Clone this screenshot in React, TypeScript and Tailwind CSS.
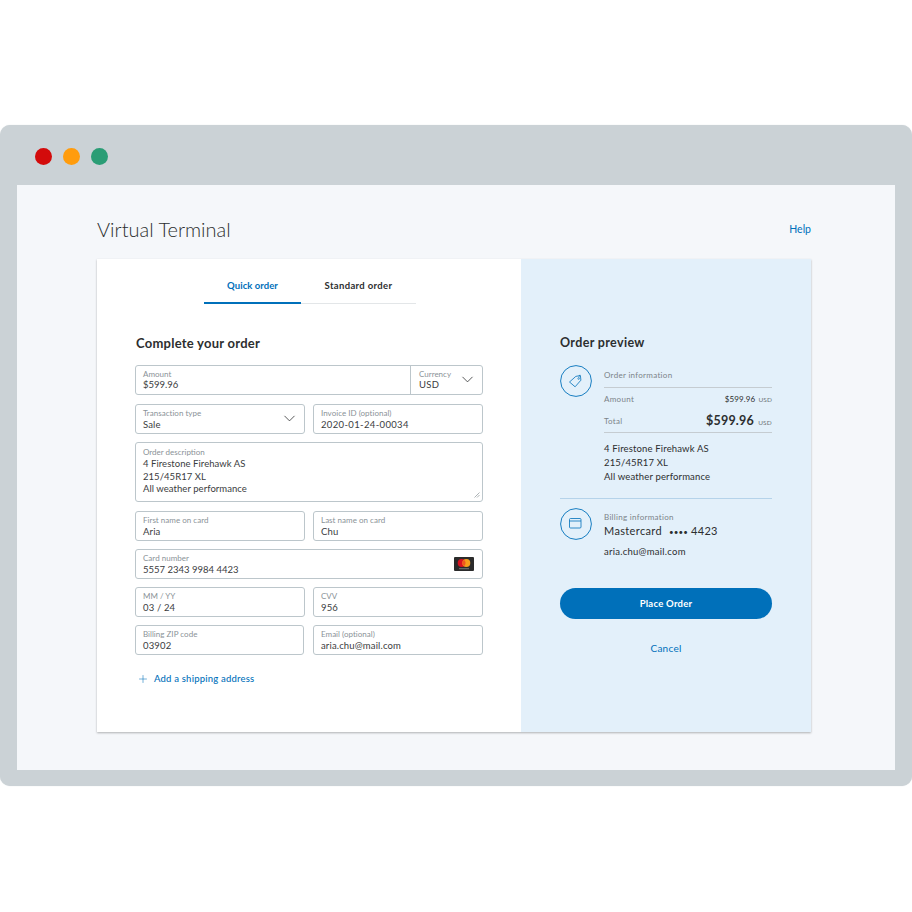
import { FC, ReactNode } from 'react';
import { ChevronDown, Plus } from 'lucide-react';

const font = { fontFamily: 'Lato, "Noto Sans", sans-serif' };

type FieldProps = {
  label: string;
  value: string;
  className?: string;
  valueClass?: string;
  chevron?: boolean;
  children?: ReactNode;
};

const Field: FC<FieldProps> = ({ label, value, className = '', valueClass = 'tracking-[0.15px]', chevron, children }) => (
  <div className={`relative h-[30px] rounded-[3px] border border-[#bcc6cb] bg-white pl-[7px] ${className}`}>
    <div className="mt-[2.5px] text-[8px] leading-[11px] tracking-[0.02px] text-[#8a9297]">{label}</div>
    <div className={`text-[9.5px] leading-[12px] text-[#3a3c3e] ${valueClass}`}>{value}</div>
    {chevron && (
      <ChevronDown className="absolute right-[5px] top-[4px] size-[19px] text-[#2c2e2f]" strokeWidth={1} />
    )}
    {children}
  </div>
);

const CardLogo: FC = () => (
  <svg viewBox="0 0 20 14" className="absolute right-[8px] top-[7px] h-[14px] w-[20px]">
    <rect width="20" height="14" rx="1" fill="#2b2b2b" />
    <circle cx="7.7" cy="6" r="4" fill="#d9121f" />
    <circle cx="12.3" cy="6" r="4" fill="#f79e1b" />
    <path d="M10 2.8a4 4 0 0 1 0 6.4a4 4 0 0 1 0-6.4z" fill="#f0591f" />
    <rect x="5" y="11.2" width="10" height="1" fill="#777" />
  </svg>
);

const TagIcon: FC = () => (
  <svg viewBox="0 0 32 32" className="size-[32px] shrink-0 text-[#0070ba]" fill="none" stroke="currentColor">
    <circle cx="16" cy="16" r="15.4" strokeWidth="0.9" />
    <path d="M9.5 17l6.3-5.6 4.6-.9.5 4.7-5.8 6.6z" strokeWidth="0.8" strokeLinejoin="round" />
    <circle cx="18.6" cy="13.6" r="0.8" strokeWidth="0.6" />
    <path d="M18.8 12.8c.2-1 .6-2 1-3" strokeWidth="0.6" />
  </svg>
);

const CardIcon: FC = () => (
  <svg viewBox="0 0 32 32" className="size-[32px] shrink-0 text-[#0070ba]" fill="none" stroke="currentColor">
    <circle cx="16" cy="16" r="15.4" strokeWidth="0.9" />
    <rect x="9.5" y="10.5" width="11.5" height="9.5" rx="1" strokeWidth="0.8" />
    <path d="M9.5 13h11.5" strokeWidth="0.8" />
  </svg>
);

export default function App() {
  return (
    <div className="h-[912px] w-[912px] bg-white pt-[125px]" style={font}>
      <div className="flex h-[661px] flex-col rounded-[10px] bg-[#cbd2d6] shadow-[0_0_1px_#cbd2d6]">
        <div className="flex h-[60px] shrink-0 items-start gap-[11px] pl-[35px] pt-[23px]">
          <div className="size-[17px] rounded-full bg-[#d30b0b]" />
          <div className="size-[17px] rounded-full bg-[#ff9c0d]" />
          <div className="size-[17px] rounded-full bg-[#2a9d75]" />
        </div>

        <div className="ml-[17px] mr-[17px] h-[585px] bg-[#f5f7fa] pl-[80px] pr-[84px]">
          <div className="flex h-[74px] items-start justify-between pt-[31px]">
            <h1 className="text-[20px] font-light leading-[26px] text-[#2c2e2f]">Virtual Terminal</h1>
            <a className="mt-[6px] text-[10.5px] leading-[14px] text-[#0070ba]">Help</a>
          </div>

          <div className="flex h-[473px] shadow-[0_1px_2px_rgba(44,46,47,0.35)]">
            <div className="w-[424px] bg-white px-[38px]">
              <div className="ml-[69px] flex h-[45px] w-[212px] border-b border-[#e3e6e8]">
                <div className="-mb-px flex w-[97px] items-center justify-center border-b-2 border-[#0070ba] pt-[12px] text-[9.5px] font-bold tracking-[0.05px] text-[#0070ba]">
                  Quick order
                </div>
                <div className="flex w-[115px] items-center justify-center pt-[11px] text-[9.5px] font-bold tracking-[0.35px] text-[#2c2e2f]">
                  Standard order
                </div>
              </div>

              <h2 className="ml-px mt-[31px] text-[13px] font-bold leading-[17px] tracking-[0.25px] text-[#2c2e2f]">Complete your order</h2>

              <div className="mt-[13px] flex flex-col gap-[8px]">
                <div className="relative mb-px flex h-[30px] rounded-[3px] border border-[#bcc6cb] bg-white">
                  <div className="flex-1 pl-[7px]">
                    <div className="mt-[3px] text-[8px] leading-[10px] text-[#8a9297]">Amount</div>
                    <div className="text-[9.5px] leading-[12px] text-[#3a3c3e]">$599.96</div>
                  </div>
                  <div className="relative w-[72px] border-l border-[#bcc6cb] pl-[8px]">
                    <div className="mt-[3px] text-[8px] leading-[10px] text-[#8a9297]">Currency</div>
                    <div className="text-[9.5px] leading-[12px] tracking-[0.35px] text-[#3a3c3e]">USD</div>
                    <ChevronDown className="absolute right-[5px] top-[4px] size-[19px] text-[#2c2e2f]" strokeWidth={1} />
                  </div>
                </div>

                <div className="flex gap-[8px]">
                  <Field label="Transaction type" value="Sale" className="w-[170px]" chevron />
                  <Field label="Invoice ID (optional)" value="2020-01-24-00034" valueClass="tracking-[0.35px]" className="w-[170px]" />
                </div>

                <div className="relative mb-px h-[60px] rounded-[3px] border border-[#bcc6cb] bg-white pl-[7px]">
                  <div className="mt-[4px] text-[8px] leading-[11px] text-[#8a9297]">Order description</div>
                  <div className="text-[9.5px] leading-[12.5px] tracking-[0.05px] text-[#3a3c3e]">
                    <div>4 Firestone Firehawk AS</div>
                    <div>215/45R17 XL</div>
                    <div>All weather performance</div>
                  </div>
                  <svg viewBox="0 0 6 6" className="absolute bottom-[3px] right-[2px] size-[6px]" stroke="#8a9297" strokeWidth="0.7">
                    <path d="M0.5 5.5L5.5 0.5M3 5.5L5.5 3" />
                  </svg>
                </div>

                <div className="flex gap-[8px]">
                  <Field label="First name on card" value="Aria" className="w-[170px]" />
                  <Field label="Last name on card" value="Chu" className="w-[170px]" />
                </div>

                <Field label="Card number" value="5557 2343 9984 4423" valueClass="tracking-[0px]">
                  <CardLogo />
                </Field>

                <div className="flex gap-[8px]">
                  <Field label="MM / YY" value="03 / 24" className="w-[170px]" />
                  <Field label="CVV" value="956" className="w-[170px]" />
                </div>

                <div className="flex gap-[9px]">
                  <Field label="Billing ZIP code" value="03902" className="w-[169px]" />
                  <Field label="Email (optional)" value="aria.chu@mail.com" className="w-[170px]" />
                </div>
              </div>

              <div className="mt-[17px] flex items-center gap-[5.5px] pl-[1.5px] text-[9.5px] font-medium leading-[14px] tracking-[0.2px] text-[#0070ba]">
                <Plus className="size-[12px]" strokeWidth={1.1} />
                Add a shipping address
              </div>
            </div>

            <div className="flex-1 bg-[#e3f0fa] px-[39px] pt-[75px] text-[#2c2e2f]">
              <h2 className="text-[12.5px] font-bold leading-[17px] tracking-[0.35px]">Order preview</h2>

              <div className="mt-[14px] flex gap-[12px]">
                <TagIcon />
                <div className="flex-1">
                  <div className="flex h-[23px] items-center border-b border-[#c5ccd1] pb-[3px] text-[8px] tracking-[0.3px] text-[#7b8388]">Order information</div>
                  <div className="flex h-[22px] items-center justify-between text-[8px] tracking-[0.3px] text-[#7b8388]">
                    <span>Amount</span>
                    <span className="text-[8px] tracking-[0.1px] text-[#2c2e2f]">$599.96 <span className="ml-[1px] text-[6.5px] text-[#6c7378]">USD</span></span>
                  </div>
                  <div className="flex h-[23px] items-center justify-between border-b border-[#c5ccd1] text-[8px] tracking-[0.3px] text-[#7b8388]">
                    <span>Total</span>
                    <span className="text-[12.5px] font-bold tracking-[0.2px] text-[#2c2e2f]">$599.96 <span className="ml-[1px] text-[6.5px] font-normal text-[#6c7378]">USD</span></span>
                  </div>
                  <div className="mt-[9px] text-[9.5px] leading-[14px] tracking-[0.15px]">
                    <div>4 Firestone Firehawk AS</div>
                    <div>215/45R17 XL</div>
                    <div>All weather performance</div>
                  </div>
                </div>
              </div>

              <div className="mt-[14px] border-t border-[#b5d3ea]" />

              <div className="mt-[9px] flex gap-[12px]">
                <CardIcon />
                <div className="flex-1 pt-[3px]">
                  <div className="text-[8px] leading-[12px] tracking-[0.3px] text-[#7b8388]">Billing information</div>
                  <div className="text-[11px] leading-[15px] tracking-[0.35px]">
                    Mastercard
                    <span className="ml-[7px] text-[8px] tracking-[0.1px]">••••</span>
                    <span className="ml-[3px]">4423</span>
                  </div>
                  <div className="mt-[5px] text-[9.5px] leading-[13px] tracking-[0.25px]">aria.chu@mail.com</div>
                </div>
              </div>

              <button className="mt-[30px] block h-[31px] w-full rounded-full bg-[#0070ba] pt-px text-[9.5px] font-bold tracking-[0.25px] text-white">
                Place Order
              </button>
              <div className="mt-[22px] text-center text-[10px] tracking-[0.25px] text-[#0070ba]">Cancel</div>
            </div>
          </div>
        </div>
      </div>
    </div>
  );
}
